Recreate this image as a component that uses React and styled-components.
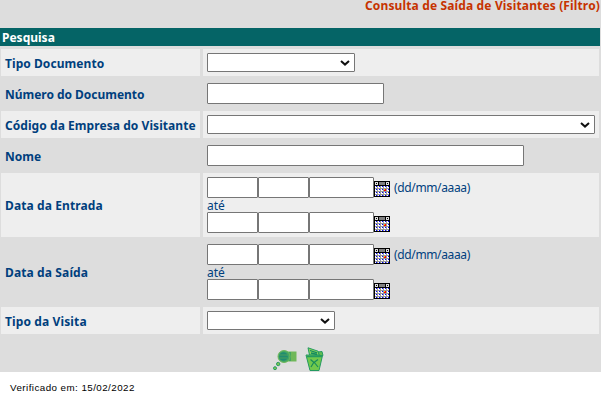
import React from "react";
import styled, { createGlobalStyle } from "styled-components";

const GlobalStyle = createGlobalStyle`
  * { box-sizing: border-box; }
  body { margin: 0; background: #fff; font-family: "Noto Sans", sans-serif; font-size: 12px; color: #003f7d; }
`;
const Panel = styled.main`
  height: 372px;
  background: #ddd;
`;
const Title = styled.h1`
  margin: 0;
  height: 28px;
  padding-right: 1px;
  text-align: right;
  font-size: 12px;
  line-height: 12px;
  font-weight: 700;
  letter-spacing: 0.14px;
  color: #c63300;
  white-space: nowrap;
`;
const SectionBar = styled.h2`
  margin: 0 1px 3px 0;
  height: 18px;
  padding-left: 2px;
  background: #056466;
  color: #fff;
  font-size: 12px;
  line-height: 19px;
  font-weight: 700;
`;
const Fields = styled.form`
  display: grid;
  grid-template-columns: 199px 396px;
  grid-template-rows: 27px 29px 27px 29px 64px 64px 27px;
  column-gap: 3px;
  row-gap: 3px;
  padding-left: 1px;
`;
const Label = styled.label`
  display: flex;
  align-items: center;
  padding: ${(p) => (p.$tall ? 0 : 2)}px 0 0 4px;
  font-weight: 700;
  white-space: nowrap;
  letter-spacing: ${(p) => p.$track}px;
  background: ${(p) => (p.$shaded ? "#eee" : "transparent")};
`;
const Cell = styled.div`
  display: flex;
  flex-direction: column;
  justify-content: center;
  padding-left: 4px;
  background: ${(p) => (p.$shaded ? "#eee" : "transparent")};
`;
const TextInput = styled.input`
  width: ${(p) => p.$width}px;
  height: 21px;
  margin: 0;
  padding: 1px 2px;
  border: 1px solid #767676;
  border-radius: 1px;
  background: #fff;
  flex: none;
`;
const SelectBox = styled.button`
  display: flex;
  align-items: center;
  justify-content: flex-end;
  width: ${(p) => p.$width}px;
  height: 19px;
  padding: 0 4px 0 0;
  border: 1px solid #767676;
  border-radius: 1px;
  background: #fff;
`;
const DateRow = styled.div`
  display: flex;
  height: 21px;
`;
const Until = styled.span`
  height: 14px;
  line-height: 15px;
`;
const Hint = styled.span`
  margin-left: 4px;
  line-height: 21px;
  letter-spacing: -0.36px;
`;
const CalendarSvg = styled.svg`
  margin-top: 4px;
  flex: none;
`;
const Actions = styled.div`
  display: flex;
  gap: 7px;
  padding: 13px 0 0 272px;
`;
const Footer = styled.footer`
  padding: 9px 0 0 10px;
  font-family: "Liberation Sans", sans-serif;
  font-size: 9.8px;
  line-height: 14px;
  letter-spacing: 0.44px;
  color: #000;
`;

const Select = ({ width }) => (
  <SelectBox type="button" $width={width}>
    <svg width="10" height="6" viewBox="0 0 10 6">
      <path d="M1 1 L5 4.6 L9 1" fill="none" stroke="#101010" strokeWidth="2" />
    </svg>
  </SelectBox>
);

const dots = [];
for (let y = 5; y < 15; y += 3) for (let x = 2; x < 15; x += 3) dots.push([x, y]);

const Calendar = () => (
  <CalendarSvg width="16" height="16" shapeRendering="crispEdges">
    <path fill="#000" d="M0 0h16v16H0z" />
    <path fill="#ddd" d="M1 1h3v3H1zM12 1h3v3h-3z" />
    <path fill="#808080" d="M5 1h6v3H5z" />
    <path fill="#000" d="M2 2h1v1H2zM13 2h1v1h-1z" />
    <path fill="#fff" d="M1 5h14v10H1z" />
    <path fill="#999" d="M1 7h14v1H1zM1 10h14v1H1zM1 13h14v1H1zM3 5h1v10H3zM6 5h1v10H6zM9 5h1v10H9zM12 5h1v10h-1z" />
    {dots.map(([x, y]) => <rect key={`${x}-${y}`} x={x} y={y} width="1" height="1" fill="#00f" />)}
    <path fill="#f00" d="M10 8h2v2h-2z" />
    <path fill="#fc0" d="M10 8h1v1h-1z" />
  </CalendarSvg>
);

const DateRange = () => (
  <>
    <DateRow>
      <TextInput $width={51} /><TextInput $width={51} /><TextInput $width={65} />
      <Calendar /><Hint>(dd/mm/aaaa)</Hint>
    </DateRow>
    <Until>até</Until>
    <DateRow>
      <TextInput $width={51} /><TextInput $width={51} /><TextInput $width={65} />
      <Calendar />
    </DateRow>
  </>
);

const rows = [
  { label: "Tipo Documento", track: 0.06, control: <Select width={148} /> },
  { label: "Número do Documento", track: -0.03, control: <TextInput $width={177} /> },
  { label: "Código da Empresa do Visitante", track: 0.06, control: <Select width={388} /> },
  { label: "Nome", track: 0, control: <TextInput $width={317} /> },
  { label: "Data da Entrada", track: 0.1, tall: true, control: <DateRange /> },
  { label: "Data da Saída", track: 0.12, tall: true, control: <DateRange /> },
  { label: "Tipo da Visita", track: 0.12, control: <Select width={128} /> },
];

const SearchIcon = () => (
  <svg width="26" height="25" viewBox="0 0 26 25">
    <path d="M12 4.500h12.500v10H12z" fill="#70b85a" />
    <path d="M15 5h4v9h-4z" fill="#43a663" />
    <circle cx="12" cy="9.500" r="6" fill="#43a663" stroke="#70b85a" />
    <circle cx="11.500" cy="9.500" r="4.300" fill="#218c70" />
    <path d="M8 8h8M8 11h7" stroke="#4ca05c" />
    <circle cx="6.200" cy="17" r="1.700" fill="#7cc84e" stroke="#2a9a68" />
    <circle cx="3" cy="21.200" r="1.500" fill="#7cc84e" stroke="#2a9a68" />
  </svg>
);

const TrashIcon = () => (
  <svg width="20" height="25" viewBox="0 0 20 25">
    <path d="M4.500 8L3 .8l10 3.400L15 8z" fill="#8ad45a" stroke="#249a60" />
    <path d="M5 3.500l7 2.300M6 6l6 1.500" stroke="#148a60" strokeWidth="1.300" />
    <path d="M13 5l4-.5 1 4-3 1z" fill="#62bd50" stroke="#249a60" />
    <path d="M1 8l16.500.5L14 23.500H5z" fill="#72c94c" stroke="#249a60" />
    <path d="M2 9.500h15" stroke="#249a60" strokeWidth="1.500" />
    <path d="M5.500 12.500l3.500 3 4-3M9 15l-3 5M9 15l4 5" fill="none" stroke="#188c5a" strokeWidth="1.200" />
  </svg>
);

export default function App() {
  return (
    <>
      <GlobalStyle />
      <Panel>
        <Title>Consulta de Saída de Visitantes (Filtro)</Title>
        <SectionBar>Pesquisa</SectionBar>
        <Fields>
          {rows.map(({ label, track, tall, control }, i) => (
            <React.Fragment key={label}>
              <Label $shaded={i % 2 === 0} $track={track} $tall={tall}>{label}</Label>
              <Cell $shaded={i % 2 === 0}>{control}</Cell>
            </React.Fragment>
          ))}
        </Fields>
        <Actions>
          <SearchIcon />
          <TrashIcon />
        </Actions>
      </Panel>
      <Footer>Verificado em: 15/02/2022</Footer>
    </>
  );
}
